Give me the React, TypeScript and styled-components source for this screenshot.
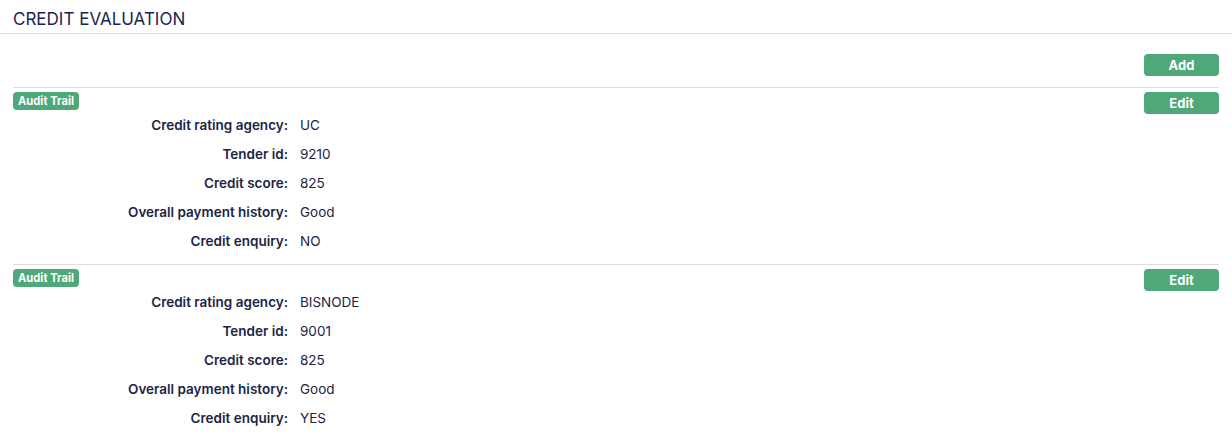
import React from "react";
import styled, { createGlobalStyle } from "styled-components";

const GlobalStyle = createGlobalStyle`
  html, body { margin: 0; padding: 0; background: #ffffff; }
  body { font-family: Inter, "Noto Sans", "Liberation Sans", sans-serif; color: #1b2447; }
  * { box-sizing: border-box; }
`;

const Page = styled.div`
  width: 1232px;
  background: #fff;
`;

const Header = styled.div`
  padding: 7px 13px 1px;
  border-bottom: 1px solid #dedede;
`;

const Title = styled.h1`
  margin: 0;
  font-size: 17px;
  line-height: 25px;
  font-weight: 400;
  color: #1c254d;
  letter-spacing: 0;
`;

const Body = styled.div`
  padding: 0 13px;
`;

const Toolbar = styled.div`
  display: flex;
  justify-content: flex-end;
  padding: 20px 0 11px;
`;

const Button = styled.button`
  width: 75px;
  height: 22px;
  border: none;
  border-radius: 4px;
  background: #4ea879;
  color: #fff;
  font-family: Inter, "Noto Sans", "Liberation Sans", sans-serif;
  font-size: 13px;
  font-weight: 700;
  line-height: 22px;
  padding: 0;
  cursor: pointer;
`;

const Section = styled.section`
  border-top: 1px solid #dedede;
  padding: 4px 0 8px;
`;

const SectionHead = styled.div`
  display: flex;
  justify-content: space-between;
  align-items: flex-start;
  height: 18px;
`;

const Badge = styled.span`
  display: inline-block;
  height: 18px;
  line-height: 18px;
  padding: 0 5px;
  border-radius: 4px;
  background: #4ea879;
  color: #fff;
  font-size: 11.2px;
  font-weight: 700;
`;

const Rows = styled.dl`
  margin: 1px 0 0;
  display: grid;
  grid-template-columns: 275px 1fr;
  column-gap: 12px;
`;

const Label = styled.dt`
  margin: 0;
  text-align: right;
  font-size: 13.5px;
  line-height: 29px;
  font-weight: 600;
  color: #1b2447;
`;

const Value = styled.dd`
  margin: 0;
  font-size: 13.5px;
  line-height: 29px;
  font-weight: 400;
  color: #1b2447;
`;

type Evaluation = {
  agency: string;
  tender: string;
  score: string;
  history: string;
  enquiry: string;
};

const data: Evaluation[] = [
  { agency: "UC", tender: "9210", score: "825", history: "Good", enquiry: "NO" },
  { agency: "BISNODE", tender: "9001", score: "825", history: "Good", enquiry: "YES" },
];

export default function App() {
  return (
    <Page>
      <GlobalStyle />
      <Header>
        <Title>CREDIT EVALUATION</Title>
      </Header>
      <Body>
        <Toolbar>
          <Button>Add</Button>
        </Toolbar>
        {data.map((e, i) => (
          <Section key={i}>
            <SectionHead>
              <Badge>Audit Trail</Badge>
              <Button>Edit</Button>
            </SectionHead>
            <Rows>
              <Label>Credit rating agency:</Label>
              <Value>{e.agency}</Value>
              <Label>Tender id:</Label>
              <Value>{e.tender}</Value>
              <Label>Credit score:</Label>
              <Value>{e.score}</Value>
              <Label>Overall payment history:</Label>
              <Value>{e.history}</Value>
              <Label>Credit enquiry:</Label>
              <Value>{e.enquiry}</Value>
            </Rows>
          </Section>
        ))}
      </Body>
    </Page>
  );
}
